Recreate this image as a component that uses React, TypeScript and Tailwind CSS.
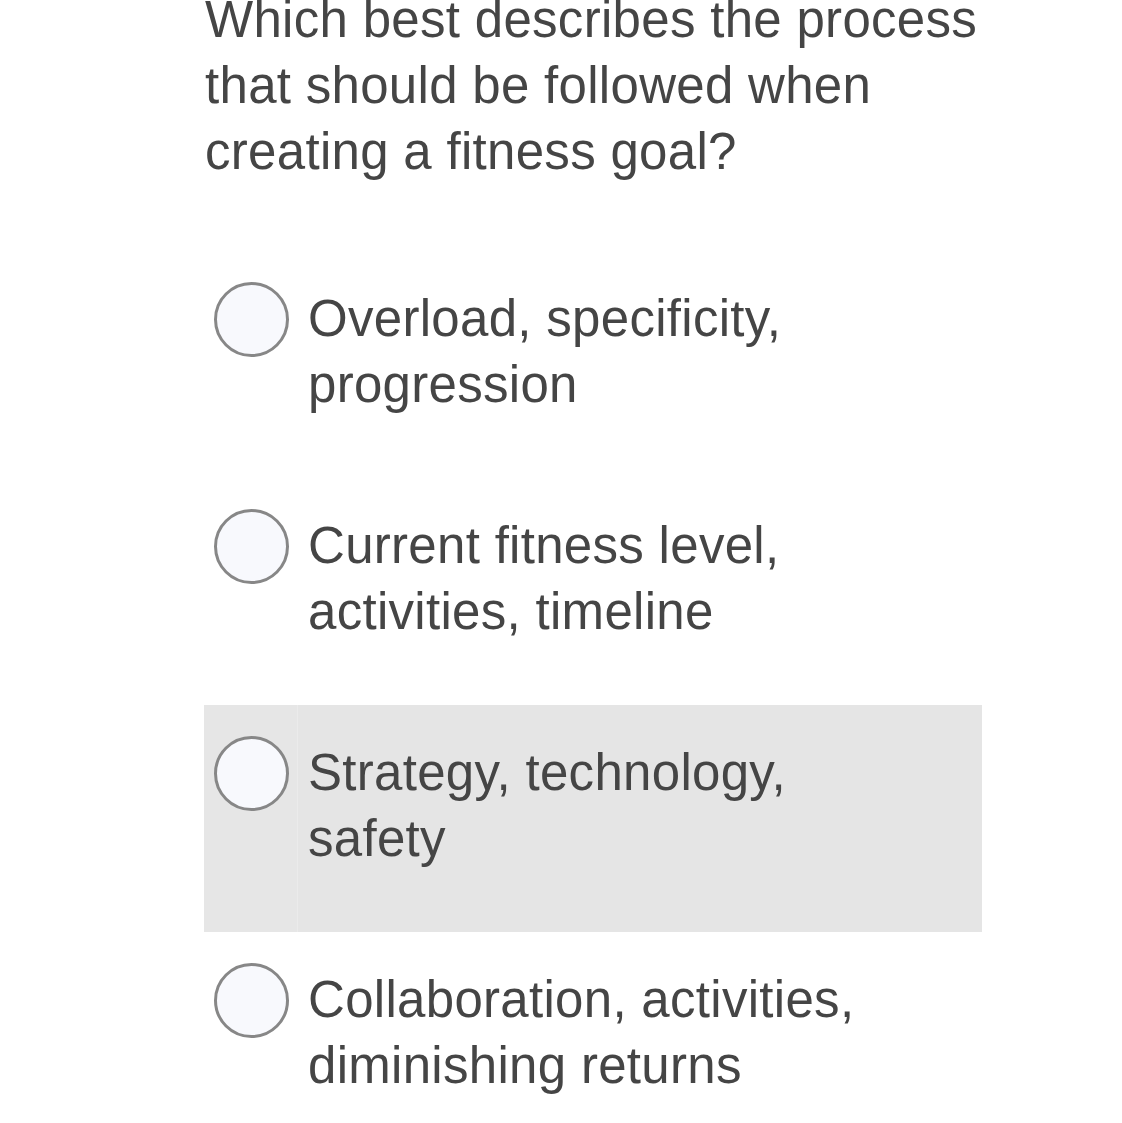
const OPTIONS = [
  { id: "a", lines: ["Overload, specificity,", "progression"] },
  { id: "b", lines: ["Current fitness level,", "activities, timeline"] },
  { id: "c", lines: ["Strategy, technology,", "safety"] },
  { id: "d", lines: ["Collaboration, activities,", "diminishing returns"] },
];

const HOVERED = "c";

function Radio() {
  return (
    <span className="mt-[-4px] block h-[75px] w-[75px] shrink-0 rounded-full border-[3px] border-[#878787] bg-[#f8f9fd]" />
  );
}

export default function App() {
  return (
    <div
      className="h-[1123px] w-[1122px] overflow-hidden bg-white text-[#454545]"
      style={{ fontFamily: '"Liberation Sans", Arial, sans-serif' }}
    >
      <div className="ml-[204px] w-[778px]">
        <p className="-mt-[13px] whitespace-nowrap pl-px text-[51px] leading-[66px] tracking-[0.3px]">
          Which best describes the process
          <br />
          that should be followed when
          <br />
          creating a fitness goal?
        </p>

        <div className="mt-[66px]">
          {OPTIONS.map((o) => {
            const active = o.id === HOVERED;
            return (
              <label
                key={o.id}
                className={
                  active
                    ? "flex h-[227px] cursor-pointer bg-[#e5e5e5]"
                    : "flex h-[227px] cursor-pointer bg-white"
                }
              >
                <span
                  className={
                    active
                      ? "flex w-[94px] shrink-0 border-r border-[#ebebeb] bg-[#e6e6e6] pl-[10px] pt-[35px]"
                      : "flex w-[94px] shrink-0 border-r border-transparent pl-[10px] pt-[35px]"
                  }
                >
                  <Radio />
                </span>
                <span className="block whitespace-nowrap pl-[10px] pt-[35px] text-[51px] leading-[66px] tracking-[0.3px]">
                  {o.lines[0]}
                  <br />
                  {o.lines[1]}
                </span>
              </label>
            );
          })}
        </div>
      </div>
    </div>
  );
}
